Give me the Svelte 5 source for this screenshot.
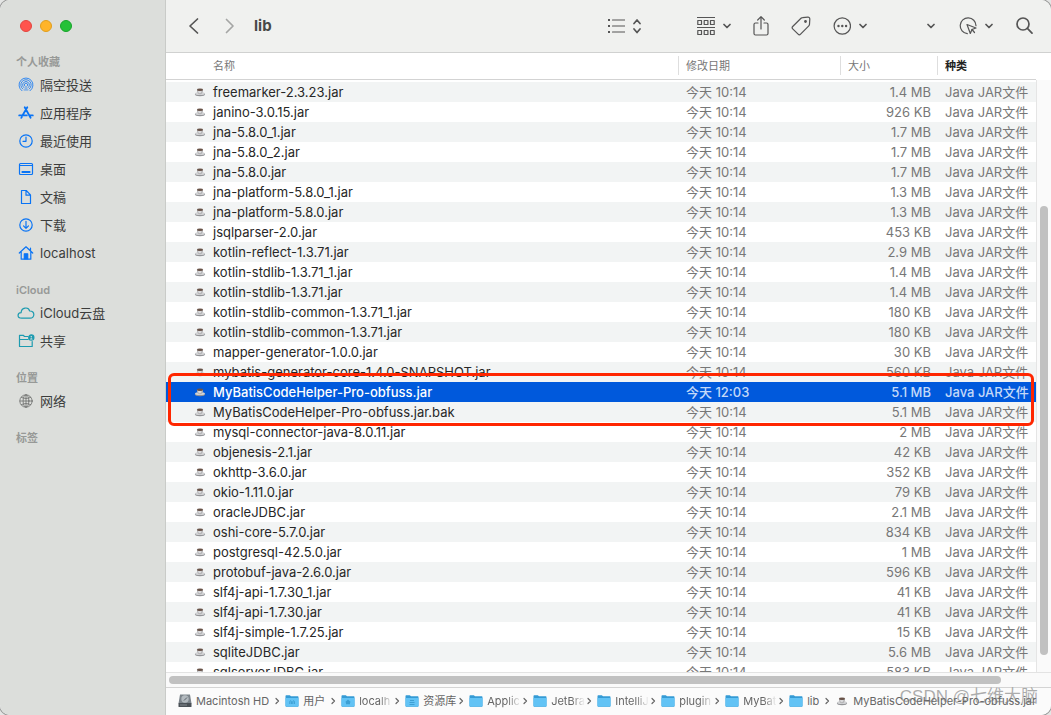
<script>
  const places = [
    {
      title: "个人收藏",
      items: [
        { icon: "airdrop", name: "隔空投送" },
        { icon: "apps", name: "应用程序" },
        { icon: "recent", name: "最近使用" },
        { icon: "desktop", name: "桌面" },
        { icon: "document", name: "文稿" },
        { icon: "download", name: "下载" },
        { icon: "home", name: "localhost" },
      ],
    },
    {
      title: "iCloud",
      items: [
        { icon: "cloud", name: "iCloud云盘" },
        { icon: "shared", name: "共享" },
      ],
    },
    { title: "位置", items: [{ icon: "network", name: "网络" }] },
    { title: "标签", items: [] },
  ];

  // name, size, time
  const files = [
    ["freemarker-2.3.23.jar", "1.4 MB"],
    ["janino-3.0.15.jar", "926 KB"],
    ["jna-5.8.0_1.jar", "1.7 MB"],
    ["jna-5.8.0_2.jar", "1.7 MB"],
    ["jna-5.8.0.jar", "1.7 MB"],
    ["jna-platform-5.8.0_1.jar", "1.3 MB"],
    ["jna-platform-5.8.0.jar", "1.3 MB"],
    ["jsqlparser-2.0.jar", "453 KB"],
    ["kotlin-reflect-1.3.71.jar", "2.9 MB"],
    ["kotlin-stdlib-1.3.71_1.jar", "1.4 MB"],
    ["kotlin-stdlib-1.3.71.jar", "1.4 MB"],
    ["kotlin-stdlib-common-1.3.71_1.jar", "180 KB"],
    ["kotlin-stdlib-common-1.3.71.jar", "180 KB"],
    ["mapper-generator-1.0.0.jar", "30 KB"],
    ["mybatis-generator-core-1.4.0-SNAPSHOT.jar", "560 KB"],
    ["MyBatisCodeHelper-Pro-obfuss.jar", "5.1 MB", "12:03"],
    ["MyBatisCodeHelper-Pro-obfuss.jar.bak", "5.1 MB"],
    ["mysql-connector-java-8.0.11.jar", "2 MB"],
    ["objenesis-2.1.jar", "42 KB"],
    ["okhttp-3.6.0.jar", "352 KB"],
    ["okio-1.11.0.jar", "79 KB"],
    ["oracleJDBC.jar", "2.1 MB"],
    ["oshi-core-5.7.0.jar", "834 KB"],
    ["postgresql-42.5.0.jar", "1 MB"],
    ["protobuf-java-2.6.0.jar", "596 KB"],
    ["slf4j-api-1.7.30_1.jar", "41 KB"],
    ["slf4j-api-1.7.30.jar", "41 KB"],
    ["slf4j-simple-1.7.25.jar", "15 KB"],
    ["sqliteJDBC.jar", "5.6 MB"],
    ["sqlserverJDBC.jar", "583 KB"],
  ];

  const path = [
    { icon: "disk", name: "Macintosh HD" },
    { icon: "users", name: "用户" },
    { icon: "house", name: "localh", cut: true },
    { icon: "library", name: "资源库", fixed: true },
    { icon: "folder", name: "Applic", cut: true },
    { icon: "folder", name: "JetBra", cut: true },
    { icon: "folder", name: "IntelliJ", cut: true },
    { icon: "folder", name: "plugin", cut: true },
    { icon: "folder", name: "MyBat", cut: true },
    { icon: "folder", name: "lib" },
    { icon: "jar", name: "MyBatisCodeHelper-Pro-obfuss.jar" },
  ];

  let selected = "MyBatisCodeHelper-Pro-obfuss.jar";
</script>

{#snippet chevron()}
  <svg class="line bold" width="8" height="20" viewBox="0 0 8 20"><path d="M1 8.5l3 3 3-3" /></svg>
{/snippet}

{#snippet cup()}
  <svg width="14" height="12" viewBox="0 0 14 12">
    <ellipse cx="7" cy="8.3" rx="5.1" ry="1.9" fill="#929396" />
    <ellipse cx="7" cy="7.7" rx="4.9" ry="1.4" fill="#d2d3d5" />
    <path d="M3.900 3.700h6.200c0 2.600-1 4.500-3.100 4.500S3.900 6.300 3.900 3.700z" fill="#b5b5b7" />
    <path d="M5 5h3.500c-.2 1.500-.8 2.200-1.700 2.200S5.200 6.500 5 5z" fill="#dadadc" />
    <ellipse cx="7" cy="3.700" rx="3.100" ry="1.200" fill="#685247" />
  </svg>
{/snippet}

{#snippet sideIcon(name)}
  <svg class="line" width="18" height="18" viewBox="0 0 18 18">
    {#if name === "airdrop"}
      <path class="thin" d="M5 14.800a7 7 0 1 1 8 0M5.900 13.100a5.200 5.200 0 1 1 6.200 0M6.800 11.600a3.400 3.400 0 1 1 4.400 0M7.900 10.200a1.700 1.700 0 1 1 2.200 0" />
      <path class="solid" d="M9 9.500l2.500 5.300h-5z" stroke="none" opacity=".4" />
    {:else if name === "apps"}
      <path class="thick" d="M7.700 3.200l5.900 10.600M10.300 3.200L5.600 11.300M4.900 12.900l-.6 1M2.200 11.400h7.600M12.400 11.400h3.400" />
    {:else if name === "recent"}
      <circle cx="9" cy="9" r="6.200" />
      <path d="M9 5v4.300H6" />
    {:else if name === "desktop"}
      <rect x="2.500" y="3.500" width="13" height="11" rx="1" />
      <path d="M3 5.500h12" />
      <path class="thick" d="M5.300 12h7.400" />
    {:else if name === "document"}
      <path d="M4.500 2.500h4.700l4.300 4.400v8.600h-9zM9 2.700V7.200h4.400" />
    {:else if name === "download"}
      <circle cx="9" cy="9" r="6.200" />
      <path d="M9 5.300v7M6.500 9.900L9 12.400l2.500-2.500" />
    {:else if name === "home"}
      <path d="M2.300 9L9 2.800 15.700 9M13.500 6.500V4M4.200 8v7.200h9.600V8" />
      <path class="solid" d="M7.300 15V9.800h3.400V15z" />
    {:else if name === "cloud"}
      <path d="M4.700 14.200c-5 0-4.500-5.400-.6-5.500C4.300 3.200 11.500 2.500 12.700 7c5.600-.2 5.300 7.200.4 7.200z" />
    {:else if name === "shared"}
      <path d="M11 4.500H7.500L6.200 3.300H2.500v11.200h12.700v-5M2.500 7.500h8.500" />
      <circle class="solid" cx="14.300" cy="5.500" r="2.600" />
      <circle cx="14.300" cy="4.800" r=".8" fill="#dcdedb" stroke="none" />
      <path d="M13 7.400c.3-1.500 2.300-1.500 2.600 0z" fill="#dcdedb" stroke="none" />
    {:else}
      <g class="thin">
        <circle cx="9" cy="9" r="6.200" />
        <ellipse cx="9" cy="9" rx="2.900" ry="6.200" />
        <path d="M9 3v12M3 9h12M4.300 5.300c3 1.600 6.400 1.600 9.400 0M4.300 12.700c3-1.600 6.400-1.600 9.400 0" />
      </g>
    {/if}
  </svg>
{/snippet}

{#snippet pathIcon(name)}
  {#if name === "jar"}
    {@render cup()}
  {:else if name === "disk"}
    <svg width="14" height="14" viewBox="0 0 14 14">
      <path d="M2 .5h10L13.500 9.500H.5z" fill="#7d858c" />
      <circle cx="7" cy="5" r="3.700" fill="#b3babf" />
      <path d="M6 6.500l3-3" stroke="#596169" />
      <rect x=".5" y="9" width="13" height="4" rx=".5" fill="#4b5157" />
      <path d="M2 11h7" stroke="#858b90" />
    </svg>
  {:else}
    <svg width="14" height="14" viewBox="0 0 14 14">
      <path d="M.5 2.200c0-.7.3-1 1-1h3.300l1.200 1h6.500c.7 0 1 .3 1 1V12c0 .6-.3.8-1 .8h-11c-.7 0-1-.2-1-.8z" fill="#359bd5" />
      <path d="M.5 4h13v7.500c0 .6-.3.9-1 .9h-11c-.7 0-1-.3-1-.9z" fill="#62c3f5" />
      {#if name === "users"}
        <path d="M4.800 10V7.500c0-1 1.600-1 1.600 0V10M7.800 10V7.500c0-1 1.600-1 1.600 0V10" fill="none" stroke="#3d9fd3" />
      {:else if name === "house"}
        <path d="M7 5.500L4 8.300h1v2h4v-2h1z" fill="#3d9fd3" />
      {:else if name === "library"}
        <path d="M5 6.500h4M4.500 8.500h5M4.500 10.500h5" stroke="#3d9fd3" />
      {/if}
    </svg>
  {/if}
{/snippet}

<div class="window">
  <aside>
    <div class="lights">
      <button class="red" aria-label="关闭"></button>
      <button class="yellow" aria-label="最小化"></button>
      <button class="green" aria-label="缩放"></button>
    </div>
    {#each places as group}
      <nav class:icloud={group.title === "iCloud"} class:devices={group.title === "位置"}>
        <h2>{group.title}</h2>
        {#each group.items as item}
          <a href="#{item.icon}">{@render sideIcon(item.icon)}<span>{item.name}</span></a>
        {/each}
      </nav>
    {/each}
  </aside>

  <main>
    <header class="toolbar">
      <div class="history">
        <button aria-label="后退"><svg class="line big" width="12" height="20" viewBox="0 0 12 20"><path d="M9.500 3L2 10 9.500 17" /></svg></button>
        <button class="off" aria-label="前进"><svg class="line big" width="12" height="20" viewBox="0 0 12 20"><path d="M2.500 3.500L9 10 2.500 16.500" /></svg></button>
      </div>
      <h1>lib</h1>
      <button class="view" aria-label="列表显示">
        <svg class="line" width="18" height="20" viewBox="0 0 18 20">
          <path d="M5.500 4h12M5.500 10h12M5.500 16h12" />
          <path class="dots" d="M1 4h2M1 10h2M1 16h2" />
        </svg>
        <svg class="line bold" width="8" height="20" viewBox="0 0 8 20"><path d="M1 7.500l3-3.500 3 3.500M1 13l3 3.500L7 13" /></svg>
      </button>
      <button aria-label="分组">
        <svg class="line" width="18" height="20" viewBox="0 0 18 20">
          <path d="M.5 1.500h17M.5 11.500h17M.8 4.500h3.700v4H.8zM7.200 4.500h3.700v4H7.200zM13.500 4.500h3.700v4h-3.700zM.8 14.500h3.700v4H.8zM7.200 14.500h3.700v4H7.200zM13.500 14.500h3.700v4h-3.700z" />
        </svg>
        {@render chevron()}
      </button>
      <button aria-label="共享">
        <svg class="line" width="16" height="20" viewBox="0 0 16 20"><path d="M5 7H2.500Q1 7 1 8.500v9Q1 19 2.500 19h11q1.500 0 1.500-1.500v-9Q15 7 13.500 7H11M8 13V.8M4.700 4L8 .7 11.300 4" /></svg>
      </button>
      <button aria-label="标签">
        <svg class="line" width="20" height="20" viewBox="0 0 20 20">
          <path d="M11.500 1.600l5.300-.4c1.300-.1 2 .6 2 1.900l-.3 5.200c0 .6-.3 1.100-.7 1.500l-8.200 8.400c-.8.8-1.700.8-2.500 0L1.700 12.900c-.8-.8-.8-1.600 0-2.400l8.300-8.200c.4-.4.9-.7 1.500-.7z" />
          <circle class="solid" cx="14.500" cy="5.500" r=".8" />
        </svg>
      </button>
      <button aria-label="更多">
        <svg class="line" width="18" height="20" viewBox="0 0 18 20">
          <circle cx="9.300" cy="10" r="8.200" />
          <g class="solid"><circle cx="5.500" cy="10" r=".6" /><circle cx="9.300" cy="10" r=".6" /><circle cx="13.100" cy="10" r=".6" /></g>
        </svg>
        {@render chevron()}
      </button>
      <button class="extra" aria-label="选项">{@render chevron()}</button>
      <button aria-label="操作">
        <svg class="line" width="18" height="20" viewBox="0 0 18 20">
          <path d="M8.300 17.600A7.900 7.900 0 1 1 17 9.700" />
          <path d="M8 8.500l9 3.500-4 1.500-1.700 4z" />
          <path d="M13 13.500l2.500 3" />
        </svg>
        {@render chevron()}
      </button>
      <button aria-label="搜索">
        <svg class="line big" width="18" height="20" viewBox="0 0 18 20"><circle cx="8" cy="8" r="6" /><path d="M12.400 12.400l4.600 4.800" /></svg>
      </button>
    </header>

    <div class="list">
      <div class="rows">
        <table>
          <colgroup><col /><col class="date" /><col class="size" /><col class="kind" /></colgroup>
          <thead>
            <tr><th>名称</th><th>修改日期</th><th>大小</th><th class="sorted">种类</th></tr>
          </thead>
          <tbody>
            {#each files as [name, size, time = "10:14"]}
              <tr class:selected={name === selected} on:click={() => (selected = name)}>
                <td><div class="name">{@render cup()}<span>{name}</span></div></td>
                <td>今天 {time}</td>
                <td class="right">{size}</td>
                <td>Java JAR文件</td>
              </tr>
            {/each}
          </tbody>
        </table>
        <div class="marker"></div>
      </div>
      <div class="vtrack"><div class="vthumb"></div></div>
    </div>
    <div class="htrack"><div class="hthumb"></div></div>

    <footer>
      {#each path as crumb, i}
        <a href="#path-{i}">
          {@render pathIcon(crumb.icon)}
          <span class:cut={crumb.cut} class:fixed={crumb.fixed}>{crumb.name}</span>
        </a>
        {#if i < path.length - 1}
          <svg class="line" width="12" height="14" viewBox="0 0 12 14"><path d="M3 4.500l2.500 2.500L3 9.500" /></svg>
        {/if}
      {/each}
    </footer>
  </main>
  <div class="watermark">CSDN @七维大脑</div>
</div>

<style>
  :global(body) {
    background: #e4e5e4;
  }
  .window {
    position: relative;
    display: flex;
    height: 100vh;
    box-sizing: border-box;
    overflow: hidden;
    border-radius: 10px;
    background: #fff;
    box-shadow: 0 0 0 1px #9b9c9b;
    color: #272727;
    font: 13px/20px Inter, "Noto Sans CJK SC", sans-serif;
  }
  button {
    display: flex;
    align-items: center;
    gap: 8px;
    padding: 0;
    border: 0;
    background: none;
    color: #555;
  }
  a {
    color: inherit;
    text-decoration: none;
  }
  svg {
    display: block;
    flex: none;
  }
  .line {
    fill: none;
    stroke: currentColor;
    stroke-width: 1.2;
    stroke-linecap: round;
    stroke-linejoin: round;
  }
  .bold,
  .big {
    stroke-width: 1.7;
  }
  .thin {
    stroke-width: 0.8;
  }
  .thick,
  .dots {
    stroke-width: 1.8;
  }
  .dots {
    stroke-linecap: butt;
  }
  .solid {
    fill: currentColor;
  }

  /* sidebar */
  aside {
    flex: none;
    width: 165px;
    border-right: 1px solid #c9cbc8;
    background: #dcdedb;
  }
  .lights {
    display: flex;
    align-items: center;
    gap: 8px;
    height: 52px;
    margin-bottom: 1px;
    padding-left: 20px;
  }
  .lights button {
    width: 12px;
    height: 12px;
    border: 1px solid #e2463f;
    border-radius: 50%;
    background: #ff544d;
  }
  .lights .yellow {
    border-color: #e09e1d;
    background: #ffb429;
  }
  .lights .green {
    border-color: #17a42b;
    background: #25c138;
  }
  nav {
    margin-bottom: 14px;
    color: #0a74f5;
  }
  nav.icloud {
    color: #1d9bb0;
  }
  nav.devices {
    color: #6b6c6b;
  }
  nav h2 {
    margin: 0;
    padding-left: 16px;
    color: #979997;
    font-size: 11px;
    font-weight: 600;
    line-height: 18px;
  }
  nav a {
    display: flex;
    align-items: center;
    gap: 5px;
    height: 28px;
    padding-left: 17px;
  }
  nav a span {
    color: #3c3d3c;
  }

  /* toolbar */
  main {
    display: flex;
    flex: 1;
    flex-direction: column;
    min-width: 0;
  }
  .toolbar {
    display: flex;
    flex: none;
    align-items: center;
    gap: 22px;
    height: 52px;
    padding: 0 18px 0 22px;
    border-bottom: 1px solid #d0d1d0;
    background: #f0f1ef;
  }
  .history {
    display: flex;
    gap: 24px;
    margin-right: -4px;
  }
  .off {
    color: #a5a6a5;
  }
  h1 {
    flex: 1;
    margin: 0;
    color: #484948;
    font-size: 15px;
    font-weight: 700;
  }
  .view {
    margin-right: 34px;
  }
  .extra {
    margin-left: 36px;
    padding: 0 2px;
  }

  /* file list */
  .list {
    display: flex;
    flex: 1;
    min-height: 0;
  }
  .rows {
    position: relative;
    flex: 1;
    overflow: hidden;
  }
  table {
    width: 100%;
    border-spacing: 0;
    table-layout: fixed;
  }
  .date {
    width: 162px;
  }
  .size {
    width: 97px;
  }
  .kind {
    width: 99px;
  }
  th {
    position: relative;
    height: 26px;
    padding: 0 0 0 8px;
    border-bottom: 1px solid #d3d3d3;
    color: #777;
    font-size: 11px;
    font-weight: 400;
    line-height: 24px;
    text-align: left;
  }
  th:first-child {
    padding-left: 47px;
  }
  th + th::before {
    content: "";
    position: absolute;
    top: 3px;
    bottom: 4px;
    left: 0;
    border-left: 1px solid #dedede;
  }
  th.sorted {
    color: #222;
    font-weight: 700;
  }
  tbody::before {
    content: "";
    display: block;
    height: 2px;
  }
  td {
    height: 20px;
    padding: 0 0 0 8px;
    overflow: hidden;
    color: #777;
    white-space: nowrap;
  }
  td:first-child {
    padding-left: 27px;
    color: #272727;
  }
  td.right {
    padding: 0 6px 0 0;
    text-align: right;
  }
  tbody tr:nth-child(odd) {
    background: #f2f4f4;
  }
  tbody tr.selected {
    background: #0059dc;
  }
  .selected td {
    color: #c4d9f8;
    font-weight: 500;
  }
  .selected td:first-child {
    color: #fff;
  }
  .name {
    display: flex;
    align-items: center;
    gap: 6px;
  }
  .marker {
    position: absolute;
    top: 320px;
    right: 2px;
    left: 2px;
    height: 47px;
    border: 3px solid #ff2600;
    border-radius: 6px;
    pointer-events: none;
  }
  .vtrack {
    flex: none;
    box-sizing: border-box;
    width: 15px;
    margin-top: 27px;
    padding: 126px 3px 17px;
    border-left: 1px solid #e5e5e5;
    background: #fafafa;
  }
  .vthumb {
    height: 100%;
    border-radius: 4px;
    background: #c1c1c1;
  }
  .htrack {
    flex: none;
    height: 14px;
    padding: 0 50px 0 3px;
    border-top: 1px solid #e3e3e3;
    border-bottom: 1px solid #d4d4d4;
    background: #fafafa;
  }
  .hthumb {
    height: 8px;
    margin-top: 3px;
    border-radius: 4px;
    background: #c1c1c1;
  }

  /* path bar */
  footer {
    display: flex;
    flex: none;
    align-items: center;
    box-sizing: border-box;
    height: 27px;
    padding: 0 0 2px 12px;
    background: #fbfbfb;
    color: #666;
    font-size: 11px;
    white-space: nowrap;
  }
  footer a {
    display: flex;
    align-items: center;
    gap: 4px;
  }
  footer span {
    padding-right: 4px;
  }
  footer .cut,
  footer .fixed {
    width: 34px;
    padding: 0;
    overflow: hidden;
  }
  footer .cut {
    mask-image: linear-gradient(to right, #000 60%, transparent);
  }
  .watermark {
    position: absolute;
    right: 13px;
    bottom: 8px;
    color: #7779;
    font-family: "Liberation Sans", "Noto Sans CJK SC", sans-serif;
    font-size: 17px;
    line-height: 20px;
    pointer-events: none;
  }
</style>
